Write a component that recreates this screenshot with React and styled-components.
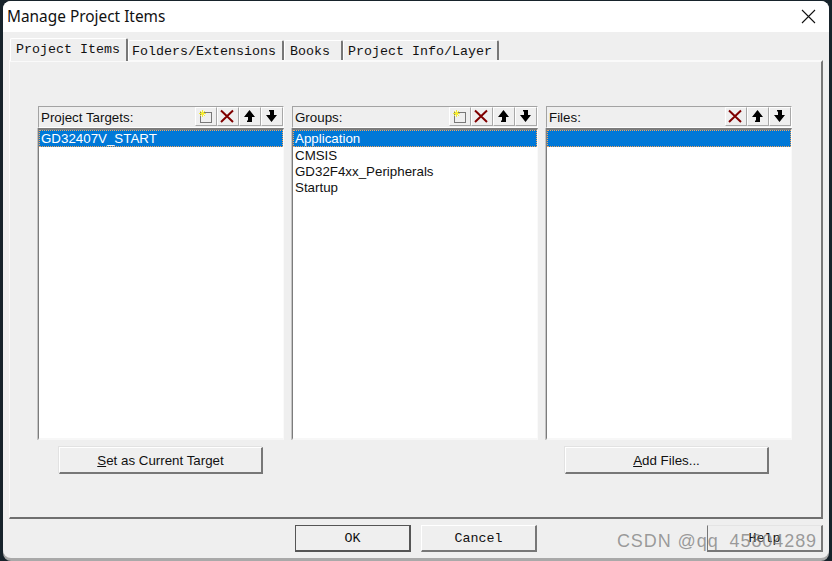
import React from 'react';
import styled, { createGlobalStyle } from 'styled-components';

const GlobalStyle = createGlobalStyle`
  html, body {
    margin: 0;
    height: 561px;
    overflow: hidden;
    background: #17232b;
  }
  * {
    box-sizing: border-box;
  }
`;

const NewIcon = () => (
  <svg width="16" height="16" viewBox="0 0 16 16">
    <rect x="2.5" y="3.5" width="11" height="10" fill="none" stroke="#000" strokeDasharray="1 1" />
    <path d="M4.5 1v7M1 4.5h7M2 2l5 5M7 2l-5 5" stroke="#f6ec2e" strokeWidth="1" />
  </svg>
);

const DeleteIcon = () => (
  <svg width="16" height="16" viewBox="0 0 16 16">
    <path d="M1 1.5l12 11.5M13 1.5L1 13" stroke="#800000" strokeWidth="2" fill="none" />
  </svg>
);

const UpIcon = () => (
  <svg width="14" height="14" viewBox="0 0 14 14">
    <path d="M6.5 1L12 8H9V13H4V11.5H5V8H1Z" fill="#000" />
  </svg>
);

const DownIcon = () => (
  <svg width="14" height="14" viewBox="0 0 14 14">
    <path d="M6.5 13L12 6H9V1H4V2.5H5V6H1Z" fill="#000" />
  </svg>
);

const icons = { new: NewIcon, delete: DeleteIcon, up: UpIcon, down: DownIcon };

const columns = [
  {
    label: 'Project Targets:',
    tools: ['new', 'delete', 'up', 'down'],
    items: ['GD32407V_START'],
    action: { key: 'S', rest: 'et as Current Target', offset: 21 },
  },
  {
    label: 'Groups:',
    tools: ['new', 'delete', 'up', 'down'],
    items: ['Application', 'CMSIS', 'GD32F4xx_Peripherals', 'Startup'],
  },
  {
    label: 'Files:',
    tools: ['delete', 'up', 'down'],
    items: [''],
    action: { key: 'A', rest: 'dd Files...', offset: 19 },
  },
];

const tabs = [
  { label: 'Project Items', width: 118, pad: 5, active: true },
  { label: 'Folders/Extensions', width: 156, pad: 3 },
  { label: 'Books', width: 59, pad: 5 },
  { label: 'Project Info/Layer', width: 156, pad: 4 },
];

export default function App() {
  return (
    <>
      <GlobalStyle />
      <Window>
        <TitleBar>
          <Title>Manage Project Items</Title>
          <CloseIcon width="15" height="15" viewBox="0 0 15 15">
            <path d="M1 1l13 13M14 1L1 14" stroke="#111" strokeWidth="1.1" fill="none" />
          </CloseIcon>
        </TitleBar>
        <Client>
          <TabStrip>
            {tabs.map((tab) => (
              <Tab key={tab.label} $active={tab.active} $width={tab.width} $pad={tab.pad}>
                {tab.label}
              </Tab>
            ))}
          </TabStrip>
          <Pane>
            <Columns>
              {columns.map((col) => (
                <Column key={col.label}>
                  <ListHeader>
                    <ListLabel>{col.label}</ListLabel>
                    <Tools>
                      {col.tools.map((tool) => {
                        const Icon = icons[tool];
                        return (
                          <ToolButton key={tool}>
                            <Icon />
                          </ToolButton>
                        );
                      })}
                    </Tools>
                  </ListHeader>
                  <ListBox>
                    {col.items.map((item, i) => (
                      <ListRow key={item || i} $selected={i === 0}>
                        {item}
                      </ListRow>
                    ))}
                  </ListBox>
                  {col.action && (
                    <ActionButton $offset={col.action.offset}>
                      <u>{col.action.key}</u>
                      {col.action.rest}
                    </ActionButton>
                  )}
                </Column>
              ))}
            </Columns>
          </Pane>
          <Footer>
            <DialogButton $default>OK</DialogButton>
            <DialogButton>Cancel</DialogButton>
            <HelpButton>Help</HelpButton>
          </Footer>
        </Client>
        <Watermark>CSDN @qq_45804289</Watermark>
      </Window>
    </>
  );
}

const Window = styled.div`
  position: relative;
  width: 826px;
  height: 557px;
  margin: 1px 0 0 3px;
  display: flex;
  flex-direction: column;
  border-radius: 8px;
  overflow: hidden;
  background: #efefef;
  box-shadow: 0 3px 0 #a9a9a9;
`;

const TitleBar = styled.div`
  height: 31px;
  flex: none;
  display: flex;
  align-items: center;
  justify-content: space-between;
  padding: 0 13px 0 4px;
  background: #fff;
`;

const Title = styled.div`
  font: 15.4px/31px 'Noto Sans', 'Open Sans', sans-serif;
  color: #111;
`;

const CloseIcon = styled.svg`
  display: block;
`;

const Client = styled.div`
  flex: 1;
  display: flex;
  flex-direction: column;
  padding: 6px 6px 0 6px;
`;

const TabStrip = styled.div`
  position: relative;
  z-index: 1;
  height: 23px;
  display: flex;
  align-items: flex-end;
  padding-left: 1px;
  margin-bottom: -1px;
`;

const Tab = styled.div`
  flex: none;
  width: ${(p) => p.$width}px;
  height: ${(p) => (p.$active ? 23 : 20)}px;
  margin-bottom: ${(p) => (p.$active ? 0 : 1)}px;
  padding-left: ${(p) => p.$pad}px;
  font: 13.33px/${(p) => (p.$active ? 21 : 22)}px 'Liberation Mono', monospace;
  color: #111;
  white-space: pre;
  background: #efefef;
  border-top: 1px solid #fff;
  border-left: 1px solid #fff;
  border-right: 2px solid #777;
  border-top-left-radius: 2px;
  border-top-right-radius: 2px;
`;

const Pane = styled.div`
  width: 814px;
  height: 459px;
  flex: none;
  padding: 44px 0 0 28px;
  border-top: 2px solid #fafafa;
  border-left: 1px solid #fafafa;
  border-right: 2px solid #777;
  border-bottom: 2px solid #6f6f6f;
`;

const Columns = styled.div`
  display: grid;
  grid-template-columns: repeat(3, 246px);
  gap: 8px;
`;

const Column = styled.div`
  display: flex;
  flex-direction: column;
`;

const ListHeader = styled.div`
  height: 22px;
  display: flex;
  align-items: center;
  justify-content: space-between;
  border-top: 1px solid #a3a3a3;
  border-left: 1px solid #a3a3a3;
  border-right: 1px solid #fff;
  border-bottom: 1px solid #fff;
`;

const ListLabel = styled.div`
  padding: 2px 0 0 2px;
  font: 13.33px/20px 'Liberation Sans', Arial, sans-serif;
  color: #111;
`;

const Tools = styled.div`
  display: flex;
  height: 19px;
  align-self: flex-start;
`;

const ToolButton = styled.div`
  width: 22px;
  height: 19px;
  display: flex;
  align-items: flex-start;
  justify-content: center;
  padding-top: 1px;
  border-top: 1px solid #fff;
  border-left: 1px solid #fff;
  border-right: 1px solid #a8a8a8;
  border-bottom: 1px solid #a8a8a8;
`;

const ListBox = styled.div`
  height: 312px;
  background: #fff;
  border-top: 2px solid #7c7c7c;
  border-left: 1px solid #7c7c7c;
  border-right: 1px solid #fafafa;
  border-bottom: 2px solid #f7f7f7;
  box-shadow: -1px 0 0 #c4c4c4;
`;

const ListRow = styled.div`
  height: ${(p) => (p.$selected ? 17 : 16)}px;
  padding-left: 2px;
  font: 13.33px/18px 'Liberation Sans', Arial, sans-serif;
  color: ${(p) => (p.$selected ? '#fff' : '#111')};
  background: ${(p) => (p.$selected ? '#0078d7' : 'transparent')};
  outline: ${(p) => (p.$selected ? '1px dotted #f5a65b' : 'none')};
  outline-offset: -1px;
  white-space: nowrap;
`;

const ActionButton = styled.div`
  width: 204px;
  height: 27px;
  margin: 7px 0 0 ${(p) => p.$offset}px;
  font: 13.33px/25px 'Liberation Sans', Arial, sans-serif;
  color: #111;
  text-align: center;
  background: #efefef;
  border-top: 1px solid #fff;
  border-left: 1px solid #fff;
  border-right: 2px solid #777;
  border-bottom: 2px solid #777;
  box-shadow: -1px -1px 0 #e2e2e2;
`;

const Footer = styled.div`
  display: flex;
  gap: 10px;
  padding: 6px 0 0 286px;
`;

const DialogButton = styled.div`
  flex: none;
  width: 116px;
  height: 27px;
  font: 13.33px/26px 'Liberation Mono', monospace;
  color: #111;
  text-align: center;
  background: #efefef;
  border-top: 1px solid ${(p) => (p.$default ? '#555' : '#fff')};
  border-left: 1px solid ${(p) => (p.$default ? '#555' : '#fff')};
  border-right: 2px solid ${(p) => (p.$default ? '#555' : '#777')};
  border-bottom: 2px solid ${(p) => (p.$default ? '#555' : '#777')};
`;

const HelpButton = styled(DialogButton)`
  margin-left: 160px;
  border-top-color: #e4e4e4;
  border-left-color: #777;
`;

const Watermark = styled.div`
  position: absolute;
  right: 12px;
  bottom: 5px;
  font: 18px/24px 'Liberation Sans', Arial, sans-serif;
  letter-spacing: 0.92px;
  color: rgba(120, 120, 120, 0.72);
  white-space: nowrap;
`;
